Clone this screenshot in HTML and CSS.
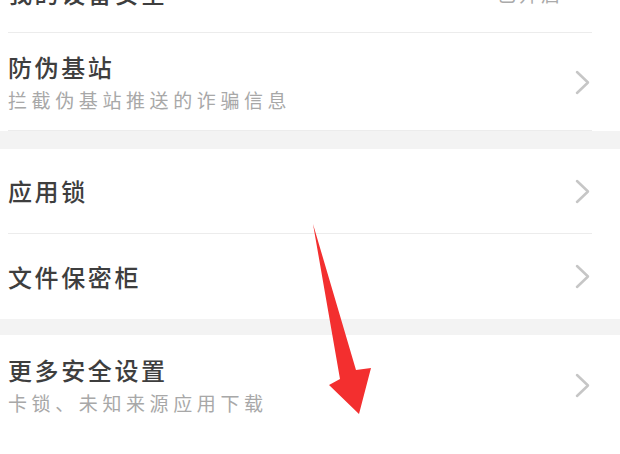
FILE: index.html
```html
<!DOCTYPE html>
<html lang="zh-CN">
<head>
<meta charset="utf-8">
<link rel="stylesheet" href="styles.css">
</head>
<body>
<div class="page">
  <section class="group">
    <div class="row row-top">
      <div class="top-inner">
        <span class="title">我的设备安全</span>
        <span class="value">已开启</span>
      </div>
    </div>
    <div class="row row-tall">
      <div class="text">
        <div class="title">防伪基站</div>
        <div class="sub">拦截伪基站推送的诈骗信息</div>
      </div>
      <svg class="chev" viewBox="0 0 15 25" width="15" height="25"><polyline points="2,2 13,12.5 2,23"/></svg>
    </div>
  </section>
  <div class="band band-a"></div>
  <section class="group">
    <div class="row row-mid">
      <div class="text"><div class="title">应用锁</div></div>
      <svg class="chev" viewBox="0 0 15 25" width="15" height="25"><polyline points="2,2 13,12.5 2,23"/></svg>
    </div>
    <div class="row row-mid row-last">
      <div class="text"><div class="title">文件保密柜</div></div>
      <svg class="chev" viewBox="0 0 15 25" width="15" height="25"><polyline points="2,2 13,12.5 2,23"/></svg>
    </div>
  </section>
  <div class="band band-b"></div>
  <section class="group">
    <div class="row row-tall row-last">
      <div class="text">
        <div class="title">更多安全设置</div>
        <div class="sub">卡锁、未知来源应用下载</div>
      </div>
      <svg class="chev" viewBox="0 0 15 25" width="15" height="25"><polyline points="2,2 13,12.5 2,23"/></svg>
    </div>
  </section>
  <svg class="arrow" viewBox="0 0 620 454" width="620" height="454">
    <polygon points="313,224 356,370 371,368 359,414 329,385 340,379"/>
  </svg>
</div>
</body>
</html>
```
FILE: styles.css
```css
html, body {
  margin: 0;
  padding: 0;
  background: #ffffff;
}
.page {
  position: relative;
  width: 620px;
  height: 454px;
  overflow: hidden;
  font-family: "Noto Sans CJK SC", "Noto Sans", sans-serif;
}
.group {
  padding: 0 28px 0 8px;
}
.row {
  display: flex;
  align-items: center;
  justify-content: space-between;
  border-bottom: 1px solid #ececec;
  box-sizing: border-box;
}
.row-last {
  border-bottom: none;
}
.row-top {
  height: 33px;
  overflow: hidden;
  align-items: flex-start;
}
.top-inner {
  display: flex;
  justify-content: space-between;
  align-items: center;
  width: 100%;
  margin-top: -21px;
}
.top-inner .value {
  font-size: 19px;
  letter-spacing: 3px;
  color: #aaaaaa;
  margin-right: 29px;
}
.row-tall {
  height: 98px;
  padding-top: 2px;
}
.row-mid {
  height: 85px;
}
.text {
  display: flex;
  flex-direction: column;
  gap: 7px;
}
.title {
  font-size: 24px;
  line-height: 28px;
  letter-spacing: 2.6px;
  font-weight: 500;
  color: #3e3e3e;
}
.sub {
  font-size: 19px;
  line-height: 24px;
  letter-spacing: 4.6px;
  color: #a8a8a8;
}
.chev {
  margin-right: 2px;
  fill: none;
  stroke: #c6c6c6;
  stroke-width: 2.5;
  stroke-linecap: round;
  stroke-linejoin: round;
}
.band {
  background: #f3f3f3;
}
.band-a {
  height: 18px;
}
.band-b {
  height: 16px;
}
.arrow {
  position: absolute;
  left: 0;
  top: 0;
  pointer-events: none;
}
.arrow polygon {
  fill: #f32f2f;
}
```
